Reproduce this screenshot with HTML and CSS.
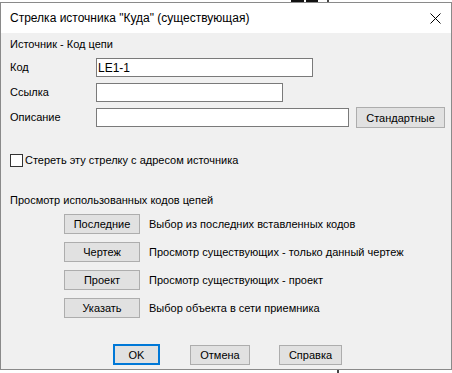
FILE: index.html
```html
<!DOCTYPE html>
<html lang="ru">
<head>
    <meta charset="UTF-8">
    <title>Стрелка источника "Куда" (существующая)</title>
    <link rel="stylesheet" href="styles.css">
</head>
<body>
    <div class="desk-top">
        <span class="ink ink-a"></span>
        <span class="ink ink-b"></span>
        <span class="ink ink-line"></span>
    </div>
    <div class="dialog">
        <div class="titlebar">
            <span class="title">Стрелка источника "Куда" (существующая)</span>
            <svg class="close" width="11" height="11" viewBox="0 0 11 11">
                <path d="M0.5 0.5 L10.5 10.5 M10.5 0.5 L0.5 10.5" stroke="#000" stroke-width="1" fill="none"/>
            </svg>
        </div>
        <div class="content">
            <div class="group-title">Источник - Код цепи</div>
            <div class="fields">
                <label>Код</label>
                <div class="field-row"><input class="input w-code" type="text" value="LE1-1"></div>
                <label>Ссылка</label>
                <div class="field-row"><input class="input w-ref" type="text"></div>
                <label>Описание</label>
                <div class="field-row">
                    <input class="input w-desc" type="text">
                    <button class="btn btn-std">Стандартные</button>
                </div>
            </div>

            <div class="check-row">
                <span class="checkbox"></span>
                <span>Стереть эту стрелку с адресом источника</span>
            </div>

            <div class="group-title browse-title">Просмотр использованных кодов цепей</div>
            <div class="browse">
                <div class="browse-row"><button class="btn btn-browse">Последние</button><span>Выбор из последних вставленных кодов</span></div>
                <div class="browse-row"><button class="btn btn-browse">Чертеж</button><span>Просмотр существующих - только данный чертеж</span></div>
                <div class="browse-row"><button class="btn btn-browse">Проект</button><span>Просмотр существующих - проект</span></div>
                <div class="browse-row"><button class="btn btn-browse">Указать</button><span>Выбор объекта в сети приемника</span></div>
            </div>

            <div class="actions">
                <button class="btn btn-ok">OK</button>
                <button class="btn btn-cancel">Отмена</button>
                <button class="btn btn-help">Справка</button>
            </div>
        </div>
    </div>
    <div class="desk-bottom">
        <span class="ink ink-edge"></span>
    </div>
</body>
</html>
```

FILE: styles.css
```css
* {
    box-sizing: border-box;
}
body {
    margin: 0;
    background: #fff;
    font-family: "Liberation Sans", Arial, sans-serif;
    font-size: 11px;
    color: #000;
}

/* drawing behind the dialog */
.desk-top {
    height: 2px;
    display: flex;
}
.desk-bottom {
    height: 3px;
    display: flex;
}
.ink {
    display: block;
    height: 100%;
    background: #111;
}
.ink-a {
    width: 13px;
    margin-left: 291px;
}
.ink-b {
    width: 12px;
    margin-left: 2px;
}
.ink-line {
    width: 2px;
    margin-left: 9px;
    background: #444;
}
.ink-edge {
    width: 2px;
    margin-left: 337px;
    background: #444;
}

.dialog {
    width: 452px;
    height: 368px;
    border: 1px solid #8a8a8a;
    background: #f0f0f0;
}
.titlebar {
    height: 30px;
    background: #fff;
    display: flex;
    align-items: center;
    justify-content: space-between;
    padding: 0 10px 0 9px;
    font-size: 12px;
}
.close {
    display: block;
}

.content {
    padding: 3px 9px 0;
}
.group-title {
    line-height: 16px;
}

.fields {
    margin-top: 6px;
    display: grid;
    grid-template-columns: 86px auto;
    grid-auto-rows: 25px;
}
.fields label {
    line-height: 19px;
}
.field-row {
    display: flex;
    align-items: flex-start;
    gap: 7px;
}
.input {
    height: 19px;
    border: 1px solid #7a7a7a;
    background: #fff;
    font-family: inherit;
    font-size: 12px;
    padding: 0 1px;
    margin: 0;
    outline: none;
}
.w-code { width: 217px; }
.w-ref { width: 187px; }
.w-desc { width: 253px; }

.btn {
    font-family: inherit;
    font-size: 11px;
    color: #000;
    background: #e1e1e1;
    border: 1px solid #adadad;
    padding: 0;
    margin: 0;
    height: 20px;
}
.btn-std {
    width: 89px;
    height: 21px;
    margin-top: -1px;
}

.check-row {
    margin-top: 20px;
    display: flex;
    align-items: center;
    gap: 2px;
    height: 14px;
}
.checkbox {
    width: 13px;
    height: 13px;
    border: 1px solid #333;
    background: #fff;
}

.browse-title {
    margin-top: 25px;
}
.browse {
    margin-top: 6px;
    display: flex;
    flex-direction: column;
    gap: 8px;
}
.browse-row {
    display: flex;
    align-items: center;
    gap: 9px;
    padding-left: 54px;
}
.btn-browse {
    width: 76px;
}

.actions {
    margin-top: 26px;
    display: flex;
    align-items: center;
    padding-left: 103px;
}
.btn-ok {
    width: 47px;
    height: 21px;
    border: 2px solid #0078d7;
}
.btn-cancel {
    width: 60px;
    margin-left: 30px;
}
.btn-help {
    width: 63px;
    margin-left: 29px;
}
```
